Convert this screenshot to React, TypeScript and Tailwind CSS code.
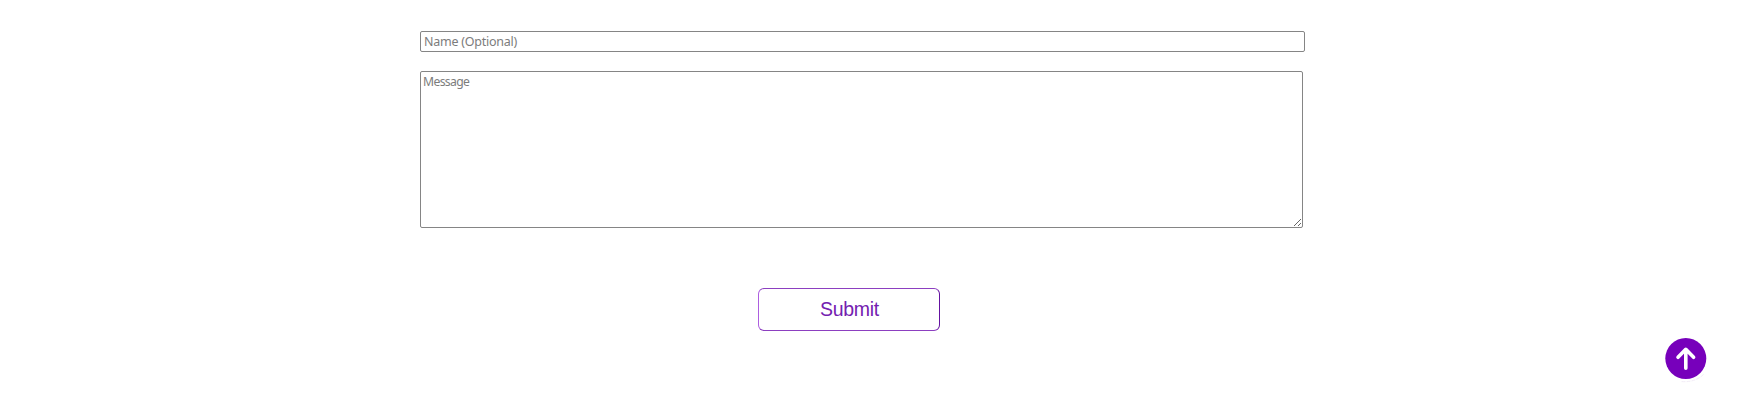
export default function App() {
  return (
    <main className="relative h-[407px] w-full overflow-hidden bg-white pt-[31px] pl-[420px]">
      <form className="flex w-[885px] flex-col" onSubmit={(e) => e.preventDefault()}>
        <input
          type="text"
          placeholder="Name (Optional)"
          className="h-[21px] w-[885px] rounded-[2px] border border-[#858585] bg-white px-[3px] font-['Trebuchet_MS','Noto_Sans',sans-serif] text-[12.5px] leading-[17px] tracking-[-0.25px] outline-none placeholder:text-[#7c7c7c]"
        />
        <textarea
          placeholder="Message"
          className="mt-[19px] block h-[157px] w-[883px] resize rounded-[2px] border border-[#858585] bg-white px-[2px] py-[1px] font-['Trebuchet_MS','Noto_Sans',sans-serif] text-[12.2px] leading-[17px] tracking-[-0.65px] outline-none placeholder:text-[#7c7c7c]"
        />
        <button
          type="submit"
          className="mt-[60px] ml-[338px] flex h-[43px] w-[182px] items-center justify-center rounded-[6px] border border-t-[#8c3fc0] border-r-[#6412a0] border-b-[#8c3fc0] border-l-[#ad5ee0] bg-white pl-px font-['Liberation_Sans',sans-serif] text-[19.5px] tracking-[-0.3px] text-[#7420b0]"
        >
          Submit
        </button>
      </form>
      <button
        type="button"
        aria-label="Back to top"
        className="absolute top-[338px] left-[1665px] h-[42px] w-[42px] rounded-full"
      >
        <svg viewBox="0 0 42 42" className="size-[42px] overflow-visible" fill="none" stroke="white" strokeWidth="3.6" strokeLinecap="round" strokeLinejoin="round">
          <path d="M17 43.6Q30 44.5 38.5 36.5" stroke="#f3edf7" strokeWidth="1" strokeDasharray="3 2" />
          <circle cx="20.8" cy="20.5" r="20.5" fill="#7700bb" stroke="none" />
          <path d="M20.8 30.2V11.5M13 19.3L20.8 11.3L28.6 19.3" />
        </svg>
      </button>
    </main>
  );
}
